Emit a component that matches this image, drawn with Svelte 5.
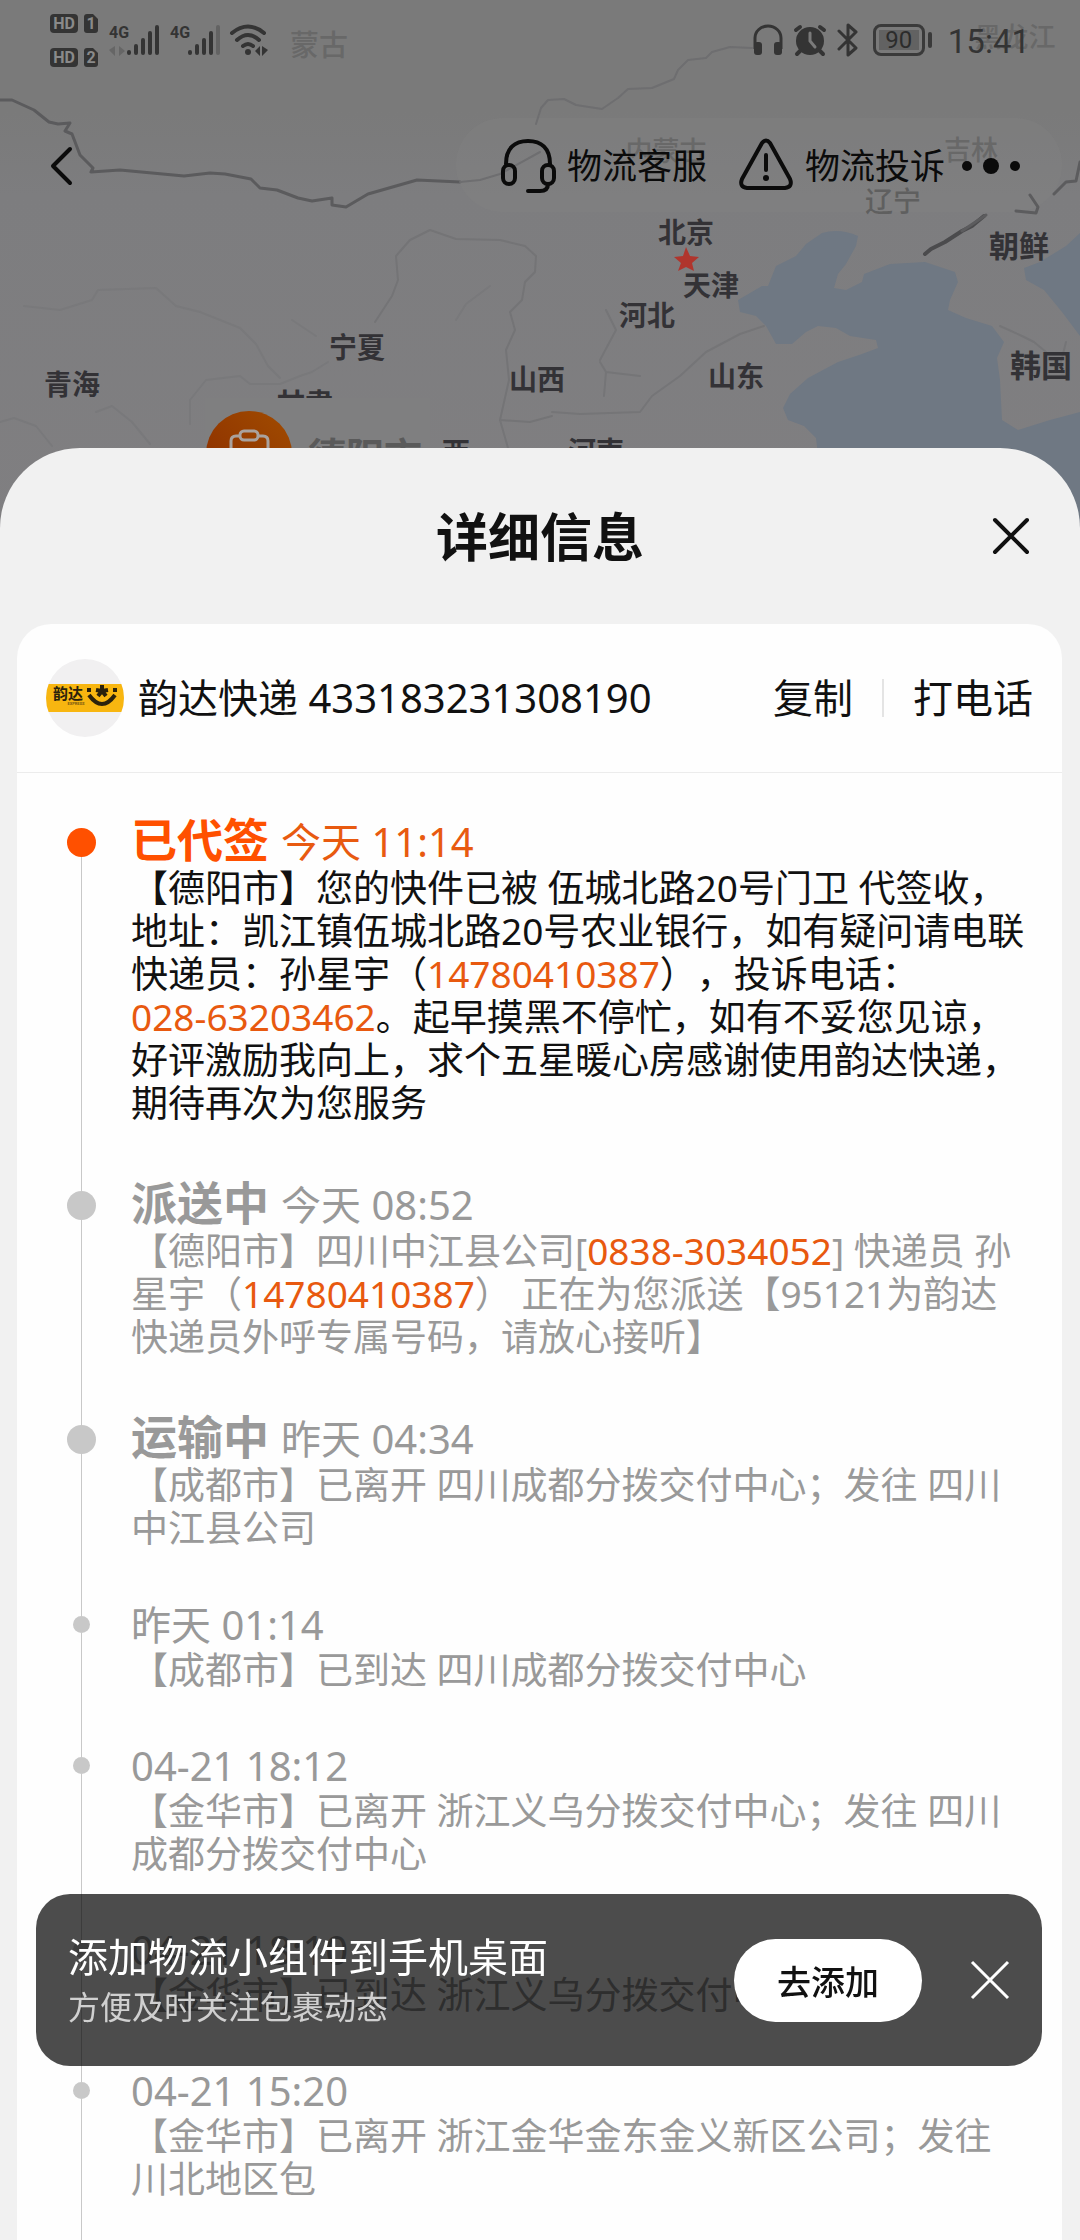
<script>
  const labels = [
    { name: '蒙古', x: 319, y: 44, size: 29, tone: 'faint' },
    { name: '黑龙江', x: 1015, y: 36, size: 27, tone: 'faint' },
    { name: '内蒙古', x: 666, y: 150, size: 27, tone: 'faint' },
    { name: '吉林', x: 971, y: 149, size: 27, tone: 'faint' },
    { name: '辽宁', x: 893, y: 201, size: 28, tone: 'dim' },
    { name: '北京', x: 686, y: 232, size: 28, tone: 'strong' },
    { name: '天津', x: 711, y: 285, size: 28, tone: 'strong' },
    { name: '河北', x: 647, y: 315, size: 28, tone: 'strong' },
    { name: '宁夏', x: 357, y: 347, size: 28, tone: 'strong' },
    { name: '青海', x: 72, y: 384, size: 28, tone: 'strong' },
    { name: '山西', x: 537, y: 379, size: 28, tone: 'strong' },
    { name: '山东', x: 736, y: 376, size: 28, tone: 'strong' },
    { name: '朝鲜', x: 1019, y: 245, size: 30, tone: 'strong' },
    { name: '韩国', x: 1041, y: 365, size: 31, tone: 'strong' },
    { name: '河南', x: 596, y: 451, size: 28, tone: 'strong' },
    { name: '甘肃', x: 305, y: 403, size: 28, tone: 'strong' }
  ];

  const events = [
    {
      status: '已代签', time: '今天 11:14', active: true,
      parts: [
        { t: '【德阳市】您的快件已被 伍城北路20号门卫 代签收，地址：凯江镇伍城北路20号农业银行，如有疑问请电联快递员：孙星宇（' },
        { t: '14780410387', tel: true },
        { t: '），投诉电话：' },
        { t: '028-63203462', tel: true },
        { t: '。起早摸黑不停忙，如有不妥您见谅，好评激励我向上，求个五星暖心房感谢使用韵达快递，期待再次为您服务' }
      ]
    },
    {
      status: '派送中', time: '今天 08:52',
      parts: [
        { t: '【德阳市】四川中江县公司[' },
        { t: '0838-3034052', tel: true },
        { t: '] 快递员 孙星宇（' },
        { t: '14780410387', tel: true },
        { t: '） 正在为您派送【95121为韵达快递员外呼专属号码，请放心接听】' }
      ]
    },
    { status: '运输中', time: '昨天 04:34', parts: [{ t: '【成都市】已离开 四川成都分拨交付中心；发往 四川中江县公司' }] },
    { time: '昨天 01:14', parts: [{ t: '【成都市】已到达 四川成都分拨交付中心' }] },
    { time: '04-21 18:12', parts: [{ t: '【金华市】已离开 浙江义乌分拨交付中心；发往 四川成都分拨交付中心' }] },
    { time: '04-21 18:10', parts: [{ t: '【金华市】已到达 浙江义乌分拨交付中心' }] },
    { time: '04-21 15:20', parts: [{ t: '【金华市】已离开 浙江金华金东金义新区公司；发往 川北地区包' }] }
  ];
</script>

<div class="app">
  <svg class="map" viewBox="0 0 1080 560" preserveAspectRatio="xMidYMin slice" aria-hidden="true">
    <defs>
      <linearGradient id="land" x1="0" y1="0" x2="0" y2="1">
        <stop offset="0" stop-color="#7a7a7a" />
        <stop offset="0.2" stop-color="#7a7a7a" />
        <stop offset="0.35" stop-color="#7d7d7f" />
        <stop offset="1" stop-color="#807f81" />
      </linearGradient>
      <linearGradient id="pin" x1="0" y1="1" x2="1" y2="0">
        <stop offset="0" stop-color="#8a2c00" />
        <stop offset="1" stop-color="#a14c00" />
      </linearGradient>
    </defs>
    <rect width="1080" height="560" fill="url(#land)" />
    <path fill="#6f7883" d="M822 233 Q840 228 858 236 L856 246 L846 264 L838 274 L834 288 L846 290 L862 282 L864 274 L890 264 L925 262 L955 272 L958 282 L950 300 L948 310 L966 318 L992 326 L1004 342 L997 358 L1000 380 L1002 420 L1018 430 L1050 420 L1080 412 L1080 560 L830 560 L816 438 L804 426 L788 420 L783 408 L790 394 L808 378 L838 362 L862 354 L878 348 L876 340 L850 336 L836 328 L818 326 L806 332 L792 344 L776 344 L766 326 L756 316 L740 312 L738 300 L762 286 L768 286 L776 266 L796 256 L806 244Z" />
    <path fill="#6f7883" d="M1080 233 L1066 246 L1040 262 L1024 268 L1026 280 L1044 290 L1062 312 L1080 336Z" />
    <rect x="456" y="118" width="606" height="94" rx="47" fill="#818181" opacity="0.4" />
    <g fill="none" stroke-linejoin="round" stroke-linecap="round">
      <path stroke="#5b5b5d" stroke-width="3" d="M0 100 H12 L34 110 L49 122 L58 124 L70 123 L65 131 L72 134 L80 155 L93 168 L91 172 L120 170 L184 176 L210 173 L225 174 L251 179 L260 188 L277 190 L298 198 L312 201 L332 198 L332 205 L346 207 L368 194 L417 180 L460 182" />
      <path stroke="#6e6e70" stroke-width="2" d="M460 182 L480 180 L500 174 L540 152 M536 124 L541 108 L548 100 L564 99 L576 105 L602 109 L618 98 L628 89 L652 88 L674 79 L678 70 L688 60 L706 58 L712 52 L730 47 L752 48" />
      <path stroke="#4b4b4d" stroke-width="4" d="M925 254 L931 249 L945 242 L962 231 L972 226 L984 216" />
      <path stroke="#5c5c5e" stroke-width="3" d="M962 231 L986 215 M1016 211 L1036 213 L1038 207 L1030 195 M1054 194 L1066 182 L1076 181 L1080 162" />
      <path stroke="#747476" stroke-width="2" d="M375 322 L392 296 L398 280 L396 256 L410 240 L430 230 L456 239 L500 240 L525 246 L536 256 L535 272 L525 282 L522 300 L510 312 L515 330 L506 350 L509 380 L500 420 L530 422 L552 416" />
      <path stroke="#757577" stroke-width="2" d="M500 420 L508 448 M552 412 L580 414 L640 412 L652 396 L680 376 L706 352 L740 334 L764 326 M600 360 L616 330 L606 310 M600 362 L606 372 L604 396 M606 372 L640 376 M1000 326 L1022 336 L1034 342 L1046 352 M1066 342 L1060 366" />
      <path stroke="#79797b" stroke-width="2" d="M190 424 L190 400 L206 380 L240 376 L250 384 L280 384 L300 376 L312 372 L328 362 M0 422 L14 418 L36 426 L52 446 M96 412 L112 406 L132 422 L150 444 M24 306 L60 310 L92 300 L98 290 L156 288 L176 306 L200 312 L240 328 L256 344 L268 366 L280 378 M292 320 L316 336 M456 320 L466 304 L490 286" />
    </g>
    {#each labels as label}
      <text class="label {label.tone}" x={label.x} y={label.y} font-size={label.size}>{label.name}</text>
    {/each}
    <rect x="205" y="398" width="225" height="70" fill="#7f7f80" />
    <text class="label strong" x="456" y="452" font-size="28">西</text>
    <text class="label city" x="365" y="455" font-size="38">德阳市</text>
    <circle cx="249" cy="454" r="43" fill="url(#pin)" />
    <g fill="none" stroke="#aaa29d" stroke-width="3">
      <path d="M240 436 H236 Q231 436 231 441 V470 H268 V441 Q268 436 263 436 H258" />
      <rect x="240" y="431" width="18" height="9" rx="4" />
    </g>
    <path fill="#b0352d" d="M686 247 L690 256 L699 257 L692 263 L694 271 L686 267 L678 271 L681 263 L674 257 L683 256Z" />
  </svg>

  <div class="top">
    <div class="statusbar">
      <svg class="signals" viewBox="0 0 220 56" width="220" height="56" role="img" aria-label="HD 4G Wi-Fi">
        <g fill="#343434">
          <rect x="0" y="2" width="28" height="19" rx="4" />
          <rect x="0" y="36" width="28" height="19" rx="4" />
          <path d="M34 5 Q34 2 37 2 H43 L48 7 V18 Q48 21 45 21 H37 Q34 21 34 18Z" />
          <path d="M34 39 Q34 36 37 36 H43 L48 41 V52 Q48 55 45 55 H37 Q34 55 34 52Z" />
        </g>
        <g class="chip">
          <text x="14" y="17">HD</text>
          <text x="14" y="51">HD</text>
          <text x="41" y="17">1</text>
          <text x="41" y="51">2</text>
        </g>
        <g class="net">
          <text x="59" y="26">4G</text>
          <text x="120" y="26">4G</text>
        </g>
        <g stroke="#343434" stroke-width="4" stroke-linecap="round">
          <path d="M79 40 V41 M86 34 V41 M93 28 V41 M100 21 V41 M107 15 V41" />
          <path d="M140 40 V41 M147 34 V41 M154 28 V41 M161 21 V41" />
          <path stroke="#636363" d="M168 15 V41" />
        </g>
        <path fill="#666" d="M65 34 V44 L59 38Z M69 34 V44 L75 39Z" />
        <g fill="none" stroke="#343434" stroke-width="4" stroke-linecap="round">
          <path d="M182 21 Q198 8 214 21 M187 28 Q198 18 209 28 M193 34 Q198 30 203 34" />
        </g>
        <circle cx="198" cy="40" r="3" fill="#343434" />
        <path fill="#343434" d="M210 34 V44 L205 39Z M212 34 V44 L218 38Z" />
      </svg>
      <div class="system">
        <svg viewBox="0 0 32 34" width="32" height="34" aria-hidden="true">
          <path d="M3 26 V15 A13 12 0 0 1 29 15 V26" fill="none" stroke="#343434" stroke-width="3" />
          <rect x="2" y="19" width="8" height="13" rx="3" fill="#343434" />
          <rect x="22" y="19" width="8" height="13" rx="3" fill="#343434" />
        </svg>
        <svg viewBox="0 0 34 34" width="34" height="34" aria-hidden="true">
          <circle cx="17" cy="18" r="14" fill="#343434" />
          <path d="M3 7 L7 4 M31 7 L27 4 M7 28 L4 31 M27 28 L30 31" stroke="#343434" stroke-width="4" stroke-linecap="round" />
          <path d="M17 10 V18 L22 24" fill="none" stroke="#7a7a7a" stroke-width="3" stroke-linecap="round" />
        </svg>
        <svg viewBox="0 0 24 34" width="24" height="34" aria-hidden="true">
          <path d="M3 8 L20 25 L12 32 V2 L20 9 L3 26" fill="none" stroke="#343434" stroke-width="3" stroke-linejoin="round" stroke-linecap="round" />
        </svg>
        <div class="battery"><span>90</span></div>
        <time>15:41</time>
      </div>
    </div>

    <nav class="navbar">
      <button class="plain" aria-label="返回">
        <svg viewBox="0 0 24 40" width="24" height="40"><path d="M20 3 L3 20 L20 37" fill="none" stroke="#0b0b0b" stroke-width="4" stroke-linecap="round" stroke-linejoin="round" /></svg>
      </button>
      <div class="actions">
        <button class="plain action">
          <svg viewBox="0 0 56 56" width="56" height="56" aria-hidden="true">
            <g fill="none" stroke="#0b0b0b" stroke-width="4" stroke-linecap="round">
              <path d="M6 26 C6 10 15 3 28 3 C41 3 50 10 50 26" />
              <rect x="3" y="27" width="12" height="19" rx="6" />
              <rect x="42" y="27" width="12" height="19" rx="6" />
              <path d="M48 46 C48 51 45 53 40 53 H28" />
            </g>
          </svg>
          <span>物流客服</span>
        </button>
        <button class="plain action">
          <svg viewBox="0 0 56 56" width="56" height="56" aria-hidden="true">
            <path d="M24 5 Q28 0 32 5 L52 41 Q55 49 47 50 H9 Q1 49 4 41Z" fill="none" stroke="#0b0b0b" stroke-width="4" stroke-linejoin="round" />
            <path d="M28 17 V32" stroke="#0b0b0b" stroke-width="4" stroke-linecap="round" />
            <circle cx="28" cy="40" r="3" fill="#0b0b0b" />
          </svg>
          <span>物流投诉</span>
        </button>
        <button class="plain" aria-label="更多">
          <svg viewBox="0 0 60 20" width="60" height="20"><g fill="#0b0b0b"><circle cx="6" cy="10" r="5" /><circle cx="30" cy="10" r="8" /><circle cx="54" cy="10" r="5" /></g></svg>
        </button>
      </div>
    </nav>
  </div>

  <section class="sheet">
    <header class="sheet-head">
      <h1>详细信息</h1>
      <button class="plain" aria-label="关闭">
        <svg viewBox="0 0 38 38" width="38" height="38"><path d="M3 3 L35 35 M35 3 L3 35" stroke="#111" stroke-width="4" stroke-linecap="round" /></svg>
      </button>
    </header>

    <div class="card">
      <div class="courier">
        <svg class="logo" viewBox="0 0 78 78" width="78" height="78" role="img" aria-label="韵达快递">
          <defs><clipPath id="disc"><circle cx="39" cy="39" r="39" /></clipPath></defs>
          <g clip-path="url(#disc)">
            <rect width="78" height="78" fill="#f1f0f1" />
            <rect y="25" width="78" height="28" fill="#f8b610" />
          </g>
          <text class="logo-name" x="22" y="40">韵达</text>
          <text class="logo-sub" x="30" y="46">EXPRESS</text>
          <path d="M43 36 Q56 54 69 36" fill="none" stroke="#2b220c" stroke-width="4" />
          <path d="M56 26 V32 M50 31 L56 32 L62 31 M52 37 L56 32 L60 37" fill="none" stroke="#2b220c" stroke-width="4" />
          <path d="M41 29 H45 V33 H41Z M67 29 H71 V33 H67Z" fill="#2b220c" />
        </svg>
        <p class="number">韵达快递 433183231308190</p>
        <button class="plain">复制</button>
        <span class="split"></span>
        <button class="plain">打电话</button>
      </div>

      <ol class="timeline">
        {#each events as event}
          <li class:major={event.status} class:active={event.active}>
            <div class="rail"><i></i></div>
            <div class="body">
              <h2>{#if event.status}<strong>{event.status}</strong>{/if}<time>{event.time}</time></h2>
              <p>{#each event.parts as part}{#if part.tel}<a href="tel:{part.t}">{part.t}</a>{:else}{part.t}{/if}{/each}</p>
            </div>
          </li>
        {/each}
      </ol>
    </div>
  </section>

  <aside class="toast">
    <div class="toast-text">
      <p class="toast-title">添加物流小组件到手机桌面</p>
      <p class="toast-sub">方便及时关注包裹动态</p>
    </div>
    <button class="add">去添加</button>
    <button class="plain" aria-label="关闭提示">
      <svg viewBox="0 0 40 40" width="40" height="40"><path d="M2 2 L38 38 M38 2 L2 38" stroke="#fff" stroke-width="3" /></svg>
    </button>
  </aside>
</div>

<style>
  :global(body) {
    margin: 0;
    background: #f1f1f1;
  }
  .app {
    position: relative;
    display: flex;
    flex-direction: column;
    height: 100vh;
    overflow: hidden;
    font-family: "Noto Sans", "Noto Sans CJK SC", sans-serif;
    color: #111;
    text-spacing-trim: space-all;
  }
  h1, h2, p, ol {
    margin: 0;
    padding: 0;
  }
  button {
    font: inherit;
    color: inherit;
    cursor: pointer;
  }
  .plain {
    display: flex;
    align-items: center;
    padding: 0;
    border: 0;
    background: none;
  }
  svg {
    display: block;
    flex: none;
  }
  .map {
    position: absolute;
    top: 0;
    left: 0;
    width: 100%;
    height: 560px;
  }
  .label {
    text-anchor: middle;
    dominant-baseline: central;
    font-weight: 500;
  }
  .strong { fill: #333236; font-weight: 700; }
  .dim { fill: #5f5f5f; }
  .faint { fill: #686868; }
  .city { fill: #5a5a5a; font-weight: 700; }

  .top {
    position: relative;
    flex: none;
    height: 448px;
  }
  .statusbar {
    display: flex;
    justify-content: space-between;
    align-items: center;
    height: 80px;
    padding: 0 50px;
  }
  .chip {
    fill: #8a8a8a;
    font: 700 16px Roboto, sans-serif;
    text-anchor: middle;
  }
  .net {
    fill: #343434;
    font: 700 16px Roboto, sans-serif;
  }
  .system {
    display: flex;
    align-items: center;
    gap: 9px;
  }
  .battery {
    position: relative;
    display: flex;
    box-sizing: border-box;
    width: 52px;
    height: 32px;
    margin: 0 14px 0 4px;
    padding: 3px;
    border: 3px solid #3a3a3a;
    border-radius: 8px;
  }
  .battery::after {
    content: "";
    position: absolute;
    top: 5px;
    right: -10px;
    width: 4px;
    height: 16px;
    border-radius: 2px;
    background: #3a3a3a;
  }
  .battery span {
    flex: 1;
    background: #626262;
    color: #2c2c2c;
    font: 24px/20px Roboto, sans-serif;
    text-align: center;
  }
  .system time {
    padding-top: 4px;
    color: #343434;
    font: 33px/40px Roboto, sans-serif;
  }
  .navbar {
    display: flex;
    justify-content: space-between;
    align-items: center;
    height: 172px;
    box-sizing: border-box;
    padding: 0 59px 0 50px;
    color: #0b0b0b;
  }
  .actions {
    display: flex;
    align-items: center;
  }
  .action {
    gap: 11px;
    margin-right: 31px;
    font-size: 35px;
    line-height: 56px;
  }
  .action + .action {
    margin-right: 16px;
  }

  .sheet {
    position: relative;
    flex: 1;
    display: flex;
    flex-direction: column;
    min-height: 0;
    border-radius: 80px 80px 0 0;
    background: #f1f1f1;
  }
  .sheet-head {
    display: grid;
    grid-template-columns: 1fr auto 1fr;
    align-items: center;
    flex: none;
    height: 176px;
    padding: 0 50px;
  }
  .sheet-head h1 {
    grid-column: 2;
    padding-top: 2px;
    font-size: 52px;
    line-height: 64px;
    font-weight: 700;
  }
  .sheet-head button {
    justify-self: end;
  }
  .card {
    flex: 1;
    min-height: 0;
    margin: 0 18px 0 17px;
    overflow-y: auto;
    scrollbar-width: none;
    border-radius: 34px 34px 0 0;
    background: #fefefe;
  }
  .courier {
    display: flex;
    align-items: center;
    height: 148px;
    padding: 0 29px;
    border-bottom: 1px solid #ececec;
    font-size: 40px;
    line-height: 56px;
  }
  .number {
    flex: 1;
    margin-left: 14px;
    white-space: nowrap;
  }
  .split {
    width: 2px;
    height: 38px;
    margin: 0 29px;
    background: #e4e4e4;
  }
  .logo-name {
    fill: #2b220c;
    font: 700 15px "Noto Sans CJK SC", sans-serif;
    text-anchor: middle;
  }
  .logo-sub {
    fill: #7a5a10;
    font: 700 4px Roboto, sans-serif;
    text-anchor: middle;
  }

  .timeline {
    padding: 41px 35px 0 50px;
    list-style: none;
  }
  li {
    display: grid;
    grid-template-columns: 29px 1fr;
    column-gap: 35px;
    color: #999;
  }
  .rail {
    display: flex;
    flex-direction: column;
    align-items: center;
  }
  .rail::before,
  .rail::after {
    content: "";
    width: 1px;
    background: #c8c8c8;
  }
  .rail::before {
    height: 14px;
  }
  .rail::after {
    flex: 1;
  }
  .rail i {
    width: 17px;
    height: 17px;
    border-radius: 50%;
    background: #c8c8c8;
  }
  .major .rail i {
    width: 29px;
    height: 29px;
  }
  .active .rail::before {
    background: none;
  }
  .active .rail i {
    background: #ff5000;
  }
  .body {
    padding-bottom: 52px;
  }
  h2 {
    display: flex;
    align-items: baseline;
    gap: 12px;
    height: 46px;
    font-size: 40px;
    line-height: 46px;
    font-weight: 400;
  }
  .major h2 {
    height: 52px;
    line-height: 52px;
  }
  .major .body {
    padding-bottom: 53px;
  }
  h2 strong {
    font-size: 46px;
    line-height: 50px;
    font-weight: 700;
  }
  .body p {
    font-size: 37px;
    line-height: 43px;
  }
  .active p {
    color: #111;
  }
  .active h2 {
    color: #e85a10;
  }
  .active strong {
    color: #ff5000;
  }
  .body a {
    color: #e8590f;
    text-decoration: none;
    white-space: nowrap;
  }

  .toast {
    position: fixed;
    left: 36px;
    right: 38px;
    bottom: 174px;
    display: flex;
    align-items: center;
    box-sizing: border-box;
    height: 172px;
    padding: 0 32px;
    border-radius: 34px;
    background: rgba(0, 0, 0, 0.7);
    color: #fff;
  }
  .toast-text {
    flex: 1;
  }
  .toast-title {
    font-size: 40px;
    line-height: 54px;
  }
  .toast-sub {
    color: #d0d0d0;
    font-size: 32px;
    line-height: 46px;
  }
  .add {
    width: 188px;
    height: 83px;
    margin-right: 48px;
    border: 0;
    border-radius: 42px;
    background: #fff;
    color: #111;
    font-size: 34px;
    font-weight: 500;
  }
</style>
